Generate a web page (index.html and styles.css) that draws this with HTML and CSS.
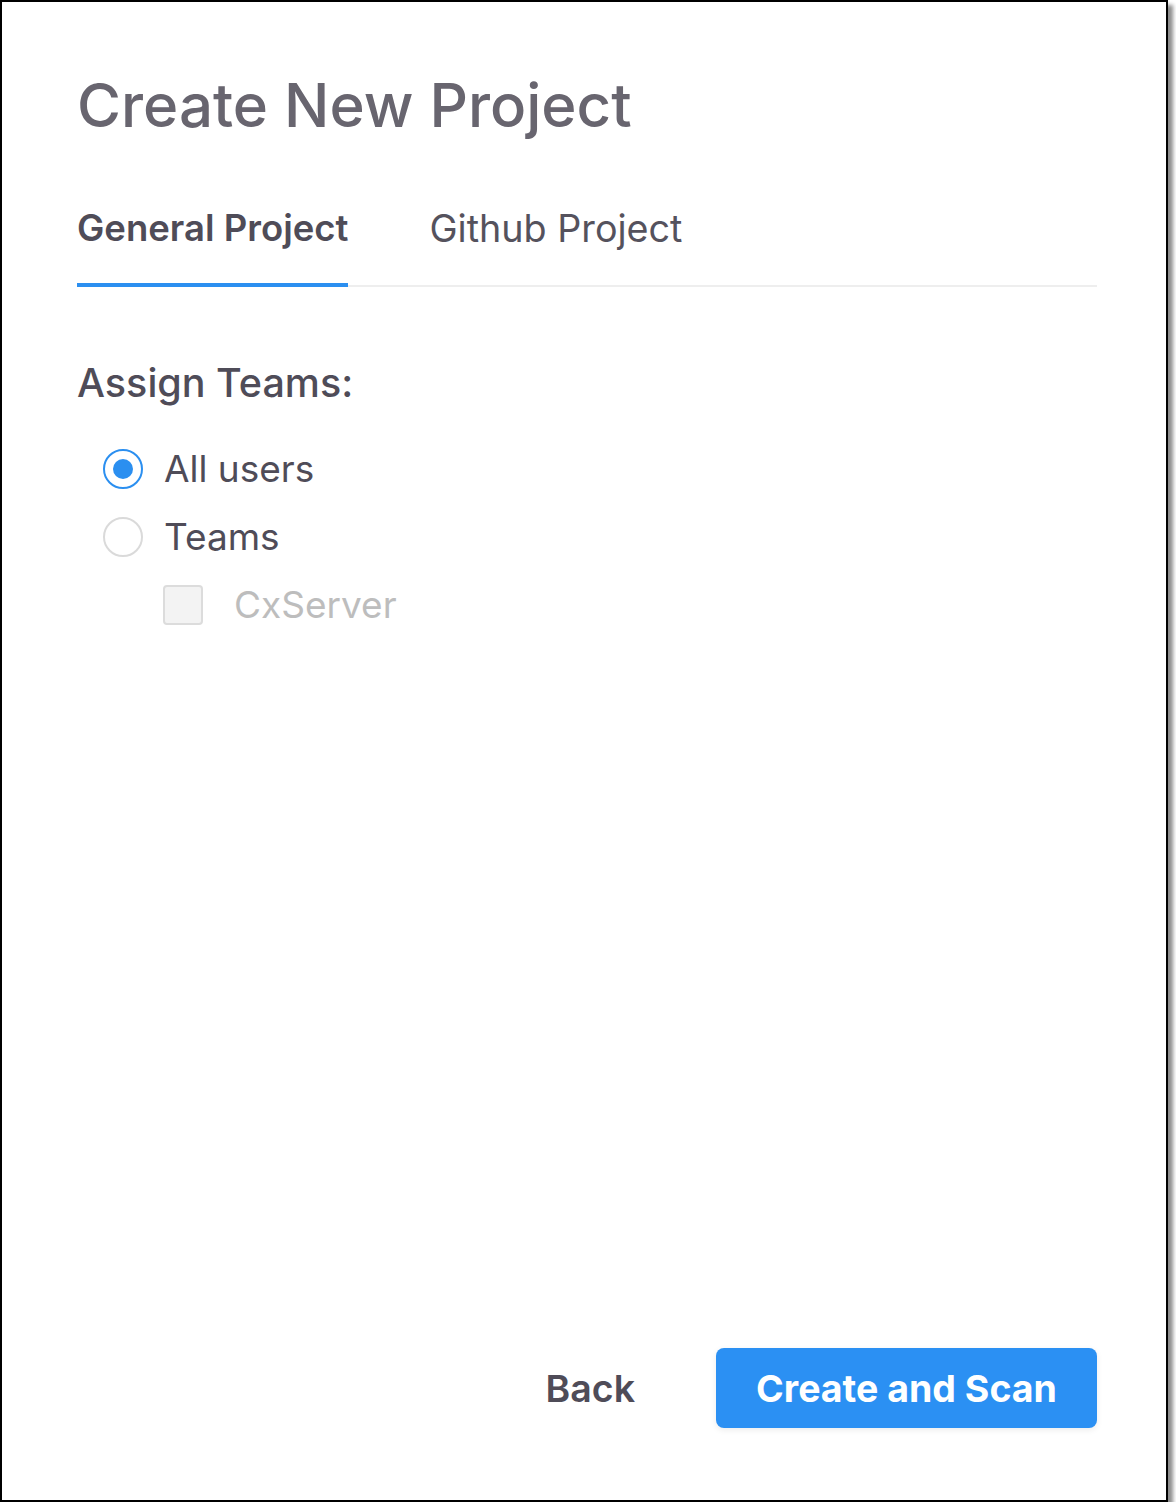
FILE: index.html
```html
<!DOCTYPE html>
<html lang="en">
<head>
<meta charset="UTF-8">
<meta name="viewport" content="width=device-width, initial-scale=1.0">
<title>Create New Project</title>
<link rel="stylesheet" href="styles.css">
</head>
<body>
<div class="dialog">
    <h1 class="title">Create New Project</h1>

    <div class="tabs">
        <div class="tab active">General Project</div>
        <div class="tab">Github Project</div>
    </div>

    <div class="section">
        <h2 class="section-title">Assign Teams:</h2>
        <div class="options">
            <label class="option">
                <span class="radio checked"></span>
                <span>All users</span>
            </label>
            <label class="option">
                <span class="radio"></span>
                <span>Teams</span>
            </label>
            <label class="option sub disabled">
                <span class="checkbox"></span>
                <span>CxServer</span>
            </label>
        </div>
    </div>

    <div class="actions">
        <button class="btn-back">Back</button>
        <button class="btn-primary">Create and Scan</button>
    </div>
</div>
</body>
</html>
```

FILE: styles.css
```css
body {
    margin: 0;
    padding: 0;
    background-color: #fff;
    font-family: Inter, "Noto Sans", sans-serif;
}

.dialog {
    width: 1168px;
    height: 1502px;
    box-sizing: border-box;
    border: 2px solid #000;
    background-color: #fff;
    box-shadow: 5px 5px 4px rgba(0, 0, 0, 0.45);
    padding: 0 69px 0 75px;
    display: flex;
    flex-direction: column;
}

.title {
    margin: 67px 0 0 0;
    font-size: 60px;
    font-weight: 500;
    color: #68656f;
    line-height: 72px;
}

.tabs {
    display: flex;
    gap: 81px;
    margin-top: 65px;
    border-bottom: 2px solid #eeeeee;
}

.tab {
    font-size: 37.7px;
    color: #55525d;
    padding-bottom: 33px;
    line-height: 44px;
    margin-bottom: -2px;
    border-bottom: 4px solid transparent;
}

.tab.active {
    font-size: 36.5px;
    font-weight: 600;
    color: #4f4c58;
    border-bottom-color: #2b8ff0;
}

.section {
    margin-top: 73px;
}

.section-title {
    margin: 0;
    font-size: 39.5px;
    font-weight: 500;
    color: #4f4c58;
    line-height: 46px;
}

.options {
    display: flex;
    flex-direction: column;
    gap: 22px;
    margin-top: 40px;
    padding-left: 26px;
}

.option {
    display: flex;
    align-items: center;
    gap: 21px;
    font-size: 37px;
    color: #4f4c58;
    line-height: 46px;
}

.radio {
    width: 40px;
    height: 40px;
    border-radius: 50%;
    box-sizing: border-box;
    border: 2px solid #dadada;
    position: relative;
}

.radio.checked {
    border-color: #2b8ff0;
}

.radio.checked::after {
    content: "";
    position: absolute;
    left: 8px;
    top: 8px;
    width: 20px;
    height: 20px;
    border-radius: 50%;
    background-color: #2b8ff0;
}

.option.sub {
    padding-left: 60px;
    gap: 31px;
}

.checkbox {
    width: 40px;
    height: 40px;
    box-sizing: border-box;
    border: 2px solid #dcdcdc;
    border-radius: 4px;
    background-color: #f3f3f3;
}

.option.disabled {
    color: #bdbdbd;
}

.actions {
    margin-top: auto;
    margin-bottom: 72px;
    display: flex;
    justify-content: flex-end;
    align-items: center;
    gap: 81px;
}

.btn-back {
    background: none;
    border: none;
    font-family: inherit;
    font-size: 37.5px;
    font-weight: 600;
    color: #4f4c58;
    padding: 0;
}

.btn-primary {
    width: 381px;
    height: 80px;
    border: none;
    border-radius: 8px;
    background-color: #2b90f3;
    color: #fff;
    font-family: inherit;
    font-size: 37.5px;
    font-weight: 700;
    box-shadow: 0 2px 6px rgba(0, 0, 0, 0.08);
}
```
